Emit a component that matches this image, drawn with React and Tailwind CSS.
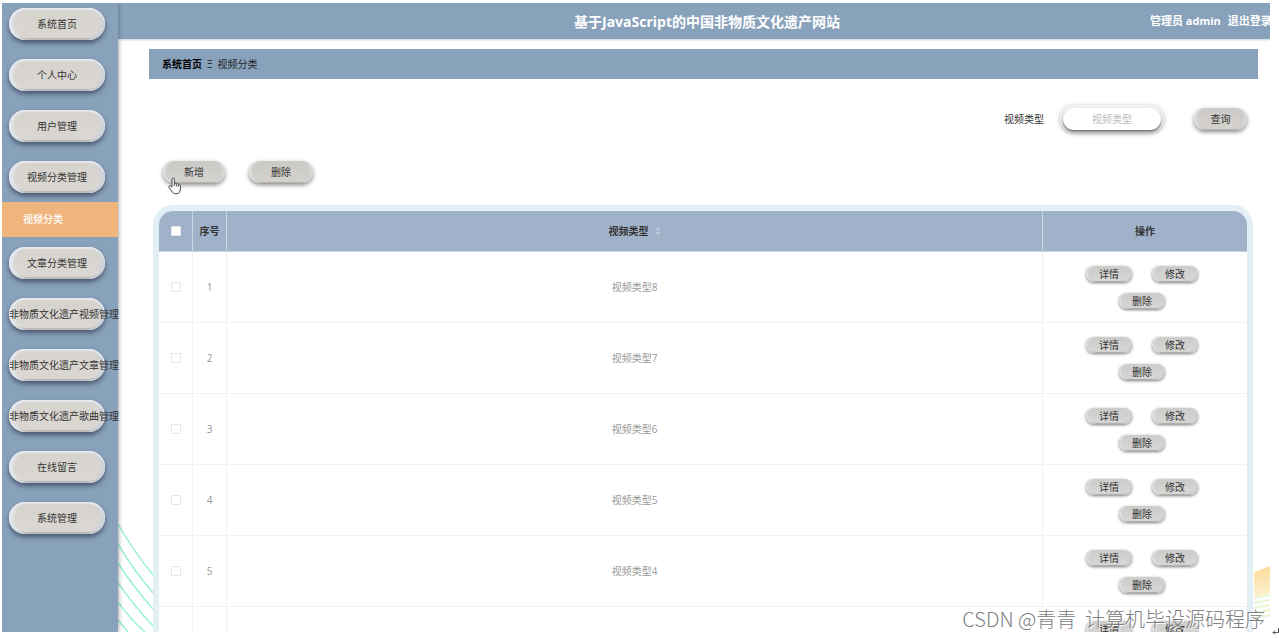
import React, { useState } from 'react';

const menuItems = [
    { label: '系统首页' },
    { label: '个人中心' },
    { label: '用户管理' },
    { label: '视频分类管理', children: ['视频分类'] },
    { label: '文章分类管理' },
    { label: '非物质文化遗产视频管理' },
    { label: '非物质文化遗产文章管理' },
    { label: '非物质文化遗产歌曲管理' },
    { label: '在线留言' },
    { label: '系统管理' },
];

const rows = [
    { id: 1, type: '视频类型8' },
    { id: 2, type: '视频类型7' },
    { id: 3, type: '视频类型6' },
    { id: 4, type: '视频类型5' },
    { id: 5, type: '视频类型4' },
    { id: 6, type: '视频类型3' },
];

const Sidebar = () => {
    return (
        <nav className="relative z-10 w-[116px] shrink-0 bg-[#89a2bc] shadow-[1px_0_4px_rgba(60,70,90,0.45)]">
            <ul>
                {menuItems.map((item) => (
                    <li key={item.label} className="group">
                        <div className="px-[7px] pt-[10px] pb-[9px] group-first:pt-[5px]">
                            <button
                                type="button"
                                className="block h-8 w-24 rounded-full bg-linear-to-b from-[#d6d3ce] to-[#dbd8d3] text-center text-[#333] whitespace-nowrap shadow-[0_3px_5px_rgba(45,55,75,0.7),inset_0_2px_1px_#e6e8ee,inset_5px_0_3px_-1px_#e3e8f0,inset_-5px_0_3px_-1px_#cdd3dc,inset_0_-2px_1px_#b4b3b4]"
                            >
                                {item.label}
                            </button>
                        </div>
                        {item.children && item.children.map((child) => (
                            <a
                                key={child}
                                href="#"
                                className="flex h-[35px] items-center bg-[#f0b57d] pl-[21px] text-white font-medium"
                            >
                                {child}
                            </a>
                        ))}
                    </li>
                ))}
            </ul>
        </nav>
    );
};

const ToolButton = ({ children, className }) => (
    <button
        type="button"
        className={`h-[22px] rounded-full bg-linear-to-b from-[#cbc9c6] to-[#d6d3cf] text-[#333] shadow-[0_2px_4px_rgba(70,70,70,0.65),inset_3px_0_2px_-1px_#e6e6e6,inset_-3px_0_2px_-1px_#dddddd,inset_0_-1px_1px_#aaaaaa] ${className}`}
    >
        {children}
    </button>
);

const RowButton = ({ children }) => (
    <button
        type="button"
        className="h-4 w-[46px] rounded-full bg-linear-to-b from-[#cbcbca] to-[#d8d8d6] leading-4 text-[#333] shadow-[0_1px_3px_rgba(70,70,70,0.7),inset_2px_0_1px_#dedede,inset_-2px_0_1px_#d0d0d0,inset_0_-1px_1px_#a4a4a4]"
    >
        {children}
    </button>
);

const App = () => {
    const [keyword, setKeyword] = useState('');
    const [selected, setSelected] = useState([]);

    const toggleRow = (id) => {
        setSelected(selected.includes(id) ? selected.filter((x) => x !== id) : [...selected, id]);
    };

    const toggleAll = () => {
        setSelected(selected.length === rows.length ? [] : rows.map((r) => r.id));
    };

    const checkboxClass = 'block mx-auto size-[10px] appearance-none rounded-[1px] border border-[#e6e6e6] bg-white checked:bg-[#f0b57d]';

    return (
        <div className="relative h-screen overflow-hidden bg-white pt-[3px] pr-[9px] pb-[6px] pl-[2px] font-['Open_Sans','Noto_Sans_CJK_SC',sans-serif] text-[10px]">
            <div className="relative flex h-full overflow-hidden">
                <Sidebar />

                <div className="relative min-w-0 flex-1">
                    {/* Background decoration */}
                    <svg className="absolute bottom-0 left-0 h-[110px] w-9" viewBox="0 0 36 110" fill="none" stroke="#9cf0dc" strokeWidth="1.5">
                        <path d="M0 2Q16 30 36 54M0 22Q16 49 36 72M0 41Q16 66 36 88M0 61Q16 84 36 105M0 80Q12 97 27 110M0 98L10 110" />
                    </svg>
                    <svg className="absolute right-0 bottom-0 h-[66px] w-4" viewBox="0 0 16 66">
                        <defs>
                            <linearGradient id="sand" x1="0" y1="0" x2="0" y2="1">
                                <stop offset="0" stopColor="#fbdb98" />
                                <stop offset="1" stopColor="#fdf3d3" />
                            </linearGradient>
                        </defs>
                        <path d="M0 6L16 0V27L0 32Z" fill="url(#sand)" />
                        <path d="M0 32L16 29M0 37L16 34M0 42L16 39M0 47L16 44M0 52L16 49" stroke="#e9f5d3" strokeWidth="2" />
                    </svg>

                    <header className="flex h-9 items-center bg-[#89a2bc] text-white shadow-[0_1px_2px_rgba(137,162,188,0.5)]">
                        <div className="w-[146px] shrink-0" />
                        <h1 className="flex-1 text-center text-[14px] font-bold">基于JavaScript的中国非物质文化遗产网站</h1>
                        <div className="flex w-[120px] shrink-0 gap-[7px] text-[11px] font-bold whitespace-nowrap">
                            <span>管理员 admin</span>
                            <a href="#">退出登录</a>
                        </div>
                    </header>

                    <main className="relative pt-[10px] pr-3 pl-[31px]">
                        <div className="flex h-[30px] items-center gap-[5px] bg-[#89a2bc] px-[13px] text-[#222]">
                            <a href="#" className="font-bold text-black">系统首页</a>
                            <span>Ξ</span>
                            <span>视频分类</span>
                        </div>

                        <form className="mt-[29px] flex h-[22px] items-center justify-end pr-[11px]">
                            <label htmlFor="videoType" className="text-[#333]">视频类型</label>
                            <input
                                id="videoType"
                                value={keyword}
                                onChange={(e) => setKeyword(e.target.value)}
                                placeholder="视频类型"
                                className="ml-[19px] h-[22px] w-[98px] rounded-full bg-white text-center outline-none placeholder:text-[#bbb] shadow-[0_2px_3px_rgba(60,60,60,0.75),0_0_0_3px_#f2f2f2,0_1px_4px_3px_rgba(110,110,110,0.5)]"
                            />
                            <ToolButton className="ml-[33px] w-[53px]">查询</ToolButton>
                        </form>

                        <div className="mt-[31px] flex gap-6 pl-[14px]">
                            <ToolButton className="w-[62px]">新增</ToolButton>
                            <ToolButton className="w-[64px]">删除</ToolButton>
                        </div>

                        <div className="mt-[22px] mr-[5px] ml-1 overflow-hidden rounded-[20px] border-[6px] border-[#e2eff4] bg-white">
                            <table className="w-full table-fixed border-separate border-spacing-0 text-center">
                                <thead>
                                    <tr className="h-[41px] bg-[#a0b2c9] text-[#333] [&>th]:border-b [&>th]:border-[#c9d6e2] [&>th:not(:last-child)]:border-r">
                                        <th className="w-[34px]">
                                            <input
                                                type="checkbox"
                                                aria-label="全选"
                                                className={checkboxClass}
                                                checked={selected.length === rows.length}
                                                onChange={toggleAll}
                                            />
                                        </th>
                                        <th className="w-[34px]">序号</th>
                                        <th>
                                            <span className="inline-flex items-center gap-[6px]">
                                                视频类型
                                                <svg className="h-2 w-[6px]" viewBox="0 0 6 8" fill="#bccadb">
                                                    <path d="M3 0L6 3H0ZM3 8L0 5H6Z" />
                                                </svg>
                                            </span>
                                        </th>
                                        <th className="w-[204px]">操作</th>
                                    </tr>
                                </thead>
                                <tbody>
                                    {rows.map((row) => (
                                        <tr key={row.id} className="h-[71px] text-[#999] [&>td]:border-b [&>td]:border-[#f2f2f2] [&>td:not(:last-child)]:border-r">
                                            <td>
                                                <input
                                                    type="checkbox"
                                                    aria-label={row.type}
                                                    className={checkboxClass}
                                                    checked={selected.includes(row.id)}
                                                    onChange={() => toggleRow(row.id)}
                                                />
                                            </td>
                                            <td>{row.id}</td>
                                            <td>{row.type}</td>
                                            <td>
                                                <div className="flex flex-wrap justify-center gap-x-5 gap-y-[11px] pr-[38px] pl-8">
                                                    <RowButton>详情</RowButton>
                                                    <RowButton>修改</RowButton>
                                                    <RowButton>删除</RowButton>
                                                </div>
                                            </td>
                                        </tr>
                                    ))}
                                </tbody>
                            </table>
                        </div>
                    </main>
                </div>

                {/* Hand cursor */}
                <svg className="absolute top-[174px] left-[166px] z-20 h-[18px] w-[14px]" viewBox="0 0 14 18" fill="#fff" stroke="#444" strokeLinejoin="round">
                    <path d="M4 10V2.2C4 .6 6.300 .6 6.300 2.200V7C6.300 5.800 8.400 5.900 8.400 7.200C8.400 6.200 10.400 6.400 10.400 7.800C10.400 7 12.400 7.200 12.400 8.600V12C12.400 15 10.800 16.800 8 16.800C5.500 16.800 4.600 15.600 3.600 14L1 10.600C.4 9.400 1.800 8.400 2.800 9.200Z" />
                    <path d="M6.300 7V9M8.400 7.500V9.500M10.400 8V9.700" fill="none" />
                </svg>
            </div>

            <p className="absolute right-[14px] bottom-[5px] z-30 text-[20px] leading-7 font-light whitespace-pre text-[#808080] [text-shadow:1px_1px_0_#fff] font-['Noto_Sans_CJK_SC',sans-serif]">
                CSDN @青青  计算机毕设源码程序
            </p>
            <svg className="absolute right-0 bottom-[2px] h-2 w-[7px]" viewBox="0 0 7 8" fill="none" stroke="#555">
                <path d="M6.500 0V4.500H1M3 2.500L1 4.500L3 6.500" />
            </svg>
        </div>
    );
};

export default App;
